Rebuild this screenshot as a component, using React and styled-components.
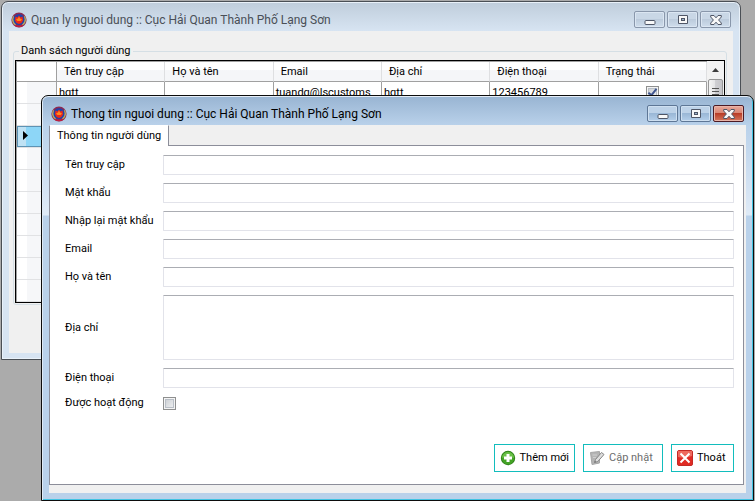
import React from "react";
import styled, { createGlobalStyle, css } from "styled-components";

const GlobalStyle = createGlobalStyle`
  *, *::before, *::after { box-sizing: border-box; }
  body {
    margin: 0;
    background: #ababab;
    font-family: Roboto, "Liberation Sans", Arial, sans-serif;
    font-size: 11px;
    line-height: 14px;
    color: #000;
  }
  input, textarea, button { font: inherit; color: inherit; }
`;

const Desktop = styled.main`
  position: relative;
  min-height: 100vh;
  padding: 1px 14px 0 1px;
  background: #ababab;
`;

const Window = styled.section`
  display: flex;
  flex-direction: column;
  border: 1px solid ${(p) => (p.$active ? "#0c0c0c" : "#4a4f55")};
  border-radius: 7px 7px 0 0;
  padding: 0 6px 6px;
  background: ${(p) =>
    p.$active
      ? "linear-gradient(#98b4d2 0, #b9d1ea 29px, #dfeaf6 119px, #b9d1ea 120px)"
      : "linear-gradient(#bfcddb 0, #d7e4f2 29px)"};
  box-shadow: inset 0 0 0 1px #e9f1f9;
`;

const FrontWindow = styled(Window)`
  position: absolute;
  top: 95px;
  left: 41px;
  right: 1px;
  padding-bottom: 7px;
  box-shadow: inset 1px 0 0 #dfeaf5, inset -1px -1px 0 #41c3e2, inset 0 1px 0 #e6eef7;
`;

const TitleBar = styled.header`
  display: flex;
  align-items: center;
  height: 29px;
  padding: 6px 3px 0 3px;
  gap: 4px;
  color: ${(p) => (p.$active ? "#000" : "#4a4f57")};
`;

const Title = styled.h1`
  flex: 1;
  margin: 0;
  font: 400 12px/16px Roboto, "Open Sans", sans-serif;
  white-space: nowrap;
`;

const Controls = styled.div`
  display: flex;
  gap: 2px;
`;

const ControlButton = styled.button`
  display: grid;
  place-items: center;
  width: 31px;
  height: 17px;
  padding: 0;
  border: 1px solid #8997ab;
  border-radius: 2px;
  background: linear-gradient(#c9d7e6 0 45%, #bccbdc 50%, #cfddec);
  box-shadow: inset 0 0 0 1px #dbe6f2;
  ${(p) =>
    p.$active &&
    css`
      border-color: #5e7796;
      background: linear-gradient(#bdd2e8 0 45%, #9ab7d6 50%, #b4cfea);
      box-shadow: inset 0 0 0 1px #cfe0f1;
    `}
  ${(p) =>
    p.$danger &&
    css`
      border-color: #4c1a24;
      background: linear-gradient(#e8a99c 0, #d98775 45%, #b93d27 50%, #d4775d);
      box-shadow: inset 0 0 0 1px #e9b4a8;
    `}
`;

const Client = styled.div`
  margin: 0 1px;
  background: #f0f0f0;
`;

const BackClient = styled(Client)`
  padding: 13px 6px 48px 4px;
`;

const FrontClient = styled(Client)`
  padding: 0 2px 8px 0;
`;

const GroupBox = styled.fieldset`
  min-width: 0;
  margin: 0;
  padding: 2px 1px 1px;
  border: 1px solid #d5dfe5;
  border-radius: 3px;
`;

const Legend = styled.legend`
  margin-left: 4px;
  padding: 0 2px;
`;

const GridFrame = styled.div`
  display: flex;
  border: 1px solid #000;
  background: #fff;
`;

const DataGrid = styled.table`
  flex: 1;
  width: 100%;
  table-layout: fixed;
  border-collapse: separate;
  border-spacing: 0;
  border-left: 1px solid #a0a0a0;
  border-top: 1px solid #a0a0a0;
`;

const SelectorCol = styled.col`
  width: 40px;
`;

const HeadCell = styled.th`
  height: 20px;
  padding: 0 7px;
  text-align: left;
  font-weight: 400;
  border-right: 1px solid ${(p) => (p.$corner ? "#a0a0a0" : "#dedfe1")};
  border-bottom: 1px solid #a0a0a0;
  background: ${(p) => (p.$corner ? "#fff" : "linear-gradient(#fff 0 40%, #f5f6f8 45%)")};
`;

const RowHead = styled.th`
  height: 22px;
  padding: 0 0 0 4px;
  text-align: left;
  border-right: 1px solid #a0a0a0;
  border-bottom: 1px solid #e1e2e4;
  background: ${(p) =>
    p.$selected
      ? "linear-gradient(90deg, #bfe2f4 0 9px, #8dd6f7 9px)"
      : "linear-gradient(90deg, #fff 0 10px, #f6f7f9 10px)"};
  ${(p) => p.$selected && css`box-shadow: inset 0 0 0 1px #5d93b4;`}
`;

const Cell = styled.td`
  height: 22px;
  padding: 0 2px;
  overflow: hidden;
  white-space: nowrap;
  text-align: ${(p) => (p.$center ? "center" : "left")};
  border-right: 1px solid #a0a0a0;
  border-bottom: 1px solid #a0a0a0;
`;

const ScrollBar = styled.div`
  display: flex;
  flex: none;
  flex-direction: column;
  align-items: center;
  width: 17px;
  background: #f0f0f0;
`;

const ScrollButton = styled.button`
  display: grid;
  place-items: center;
  width: 100%;
  height: 18px;
  padding: 0;
  border: 0;
  background: #f2f2f2;
`;

const ScrollThumb = styled.div`
  display: flex;
  justify-content: center;
  width: 15px;
  height: 60px;
  padding-top: 8px;
  border: 1px solid #979797;
  border-radius: 2px;
  background: linear-gradient(90deg, #f5f5f5, #e4e4e6 45%, #cfcfd3 50%, #c4c4c8);
`;

const CheckBox = styled.input`
  appearance: none;
  display: inline-grid;
  place-items: center;
  width: 13px;
  height: 13px;
  margin: 0;
  vertical-align: middle;
  border: 1px solid #8e8f8f;
  background: linear-gradient(135deg, #c6cacf, #f4f5f6);
  box-shadow: inset 0 0 0 1px #f4f4f4, inset 0 0 0 2px #b9bfc7;
  &:checked::after {
    content: "";
    width: 5px;
    height: 9px;
    margin-bottom: 3px;
    border: solid #3f558f;
    border-width: 0 2px 2px 0;
    rotate: 38deg;
  }
`;

const TabStrip = styled.div`
  display: flex;
  height: 20px;
`;

const Tab = styled.button`
  height: 21px;
  padding: 0 7px 1px;
  border: 1px solid #8c8e9a;
  border-top-color: #fff;
  border-bottom: 0;
  background: #fff;
  z-index: 1;
`;

const TabPanel = styled.form`
  display: flex;
  flex-direction: column;
  gap: 34px;
  padding: 9px 9px 12px 15px;
  border: 1px solid #8c8e9a;
  background: #fff;
`;

const Fields = styled.div`
  display: grid;
  grid-template-columns: 98px 1fr;
  row-gap: 8px;
  align-items: center;
`;

const Label = styled.label`
  white-space: nowrap;
`;

const fieldStyle = css`
  display: block;
  width: 100%;
  padding: 2px 4px;
  border: 1px solid #e2e3ea;
  border-top-color: #abadb3;
  border-radius: 1px;
  background: #fff;
  outline: none;
`;

const TextBox = styled.input`
  ${fieldStyle}
  height: 20px;
`;

const TextArea = styled.textarea`
  ${fieldStyle}
  height: 65px;
  resize: none;
`;

const Actions = styled.div`
  display: flex;
  justify-content: flex-end;
  gap: 8px;
`;

const ActionButton = styled.button`
  display: flex;
  align-items: center;
  gap: 4px;
  min-width: ${(p) => (p.$compact ? "63px" : "80px")};
  height: 28px;
  padding: 0 5px;
  border: 1px solid #12bdbd;
  background: #fff;
  white-space: nowrap;
  &:disabled { color: #6d6d6d; }
`;

const Emblem = () => (
  <svg width="16" height="16" viewBox="0 0 16 16" aria-hidden="true">
    <circle cx="8" cy="8" r="7.6" fill="#8c2a52" />
    <path d="M2.500 3.500A7 7 0 0 0 4 13.500L6 11L3.800 8ZM13.500 3.500A7 7 0 0 1 12 13.500L10 11L12.200 8Z" fill="#b9b060" />
    <circle cx="8" cy="7.5" r="5.6" fill="#2440a8" />
    <path d="M3.500 12.500Q8 15 12.500 12.500L11.500 14.500Q8 16 4.500 14.500Z" fill="#c02040" />
    <path d="M4.500 4.500L6.500 5.500L8 3.500L9.500 5.500L11.500 4.500L12 8.500Q11 11.500 8 12Q5 11.500 4 8.500Z" fill="#ee2a18" />
    <path d="M8 4.500L9 6.500L11 7.500L9.500 9H6.500L5 7.500L7 6.500Z" fill="#ff8a1c" />
  </svg>
);

const MinimizeIcon = () => (
  <svg width="12" height="12" viewBox="0 0 12 12" aria-hidden="true">
    <rect x="1" y="6.5" width="10" height="4" rx="1" fill="#f8f8f8" stroke="#4f5666" />
  </svg>
);

const MaximizeIcon = () => (
  <svg width="12" height="10" viewBox="0 0 12 10" aria-hidden="true">
    <path d="M1.5.5H10.500V8.500H1.500Z" fill="#f8f8f8" stroke="#4f5666" />
    <rect x="4.500" y="3.500" width="3" height="2" fill="#9db4cc" stroke="#4f5666" />
  </svg>
);

const CloseIcon = () => (
  <svg width="12" height="10" viewBox="0 0 12 10" aria-hidden="true">
    <path
      d="M.7.5H4L6 2.800L8 .5H11.300V2L8.600 5L11.300 8V9.500H8L6 7.200L4 9.500H.7V8L3.400 5L.7 2Z"
      fill="#f8f8f8"
      stroke="#4f5666"
    />
  </svg>
);

const AddIcon = () => (
  <svg width="16" height="16" viewBox="0 0 16 16" aria-hidden="true">
    <circle cx="8" cy="8" r="7.200" fill="#2c7d18" />
    <circle cx="8" cy="8" r="6.400" fill="#43a325" />
    <path d="M2 8A6 6 0 0 1 14 8Q8 5 2 8Z" fill="#6abf48" />
    <path d="M6.500 4H9.500V6.500H12V9.500H9.500V12H6.500V9.500H4V6.500H6.500Z" fill="#fff" />
  </svg>
);

const EditIcon = () => (
  <svg width="16" height="16" viewBox="0 0 16 16" aria-hidden="true">
    <path d="M1.500 2.500L10.500 1.500V13L3 14.500Z" fill="#b4b4b4" stroke="#a6a6a6" />
    <path d="M3.500 5H8M4 7.500H7" stroke="#cfcfcf" />
    <path d="M5.500 12.500L6.500 9.500L12.500 2.500L15 4.500L8.800 11.500Z" fill="#dedede" stroke="#858585" />
    <path d="M5.500 12.500L6 11L7 12Z" fill="#555" />
  </svg>
);

const ExitIcon = () => (
  <svg width="16" height="16" viewBox="0 0 16 16" aria-hidden="true">
    <rect x=".5" y=".5" width="15" height="15" rx="1.500" fill="#e02b24" stroke="#c52a25" />
    <path d="M1 1H15V6Q8 9 1 7Z" fill="#ee6a5e" />
    <path d="M3.500 3.500L12.500 12.500M12.500 3.500L3.500 12.500" stroke="#fff" strokeWidth="2" />
  </svg>
);

const RowPointer = () => (
  <svg width="8" height="9" viewBox="0 0 8 9" aria-hidden="true">
    <path d="M2 0L7 4.500L2 9Z" fill="#000" />
  </svg>
);

const UpArrow = () => (
  <svg width="7" height="4" viewBox="0 0 7 4" aria-hidden="true">
    <path d="M0 4L3.500 0L7 4Z" fill="#3c3c3c" />
  </svg>
);

const Grip = () => (
  <svg width="7" height="8" viewBox="0 0 7 8" aria-hidden="true">
    <path d="M0 .5H7M0 3.500H7M0 6.500H7" stroke="#555" />
  </svg>
);

function WindowTitle({ active, children }) {
  return (
    <TitleBar $active={active}>
      <Emblem />
      <Title>{children}</Title>
      <Controls>
        <ControlButton $active={active} type="button" aria-label="Minimize"><MinimizeIcon /></ControlButton>
        <ControlButton $active={active} type="button" aria-label="Maximize"><MaximizeIcon /></ControlButton>
        <ControlButton $active={active} $danger={active} type="button" aria-label="Close"><CloseIcon /></ControlButton>
      </Controls>
    </TitleBar>
  );
}

const columns = ["Tên truy cập", "Họ và tên", "Email", "Địa chỉ", "Điện thoại", "Trạng thái"];
const users = [["hqtt", "", "tuandq@lscustoms", "hqtt", "123456789"]];
const rowCount = 10;
const selectedRow = 2;

function UserGrid() {
  return (
    <GridFrame>
      <DataGrid>
        <colgroup>
          <SelectorCol />
          {columns.map((c) => <col key={c} />)}
        </colgroup>
        <thead>
          <tr>
            <HeadCell $corner />
            {columns.map((c) => <HeadCell key={c} scope="col">{c}</HeadCell>)}
          </tr>
        </thead>
        <tbody>
          {Array.from({ length: rowCount }, (_, i) => (
            <tr key={i}>
              <RowHead scope="row" $selected={i === selectedRow}>
                {i === selectedRow && <RowPointer />}
              </RowHead>
              {columns.slice(0, 5).map((c, j) => <Cell key={c}>{users[i]?.[j]}</Cell>)}
              <Cell $center>
                {users[i] && <CheckBox type="checkbox" defaultChecked aria-label="Trạng thái" />}
              </Cell>
            </tr>
          ))}
        </tbody>
      </DataGrid>
      <ScrollBar>
        <ScrollButton type="button" aria-label="Scroll up"><UpArrow /></ScrollButton>
        <ScrollThumb><Grip /></ScrollThumb>
      </ScrollBar>
    </GridFrame>
  );
}

function Field({ id, label, type = "text" }) {
  return (
    <>
      <Label htmlFor={id}>{label}</Label>
      <TextBox id={id} type={type} />
    </>
  );
}

export default function App() {
  return (
    <Desktop>
      <GlobalStyle />
      <Window>
        <WindowTitle>Quan ly nguoi dung :: Cục Hải Quan Thành Phố Lạng Sơn</WindowTitle>
        <BackClient>
          <GroupBox>
            <Legend>Danh sách người dùng</Legend>
            <UserGrid />
          </GroupBox>
        </BackClient>
      </Window>
      <FrontWindow $active>
        <WindowTitle active>Thong tin nguoi dung :: Cục Hải Quan Thành Phố Lạng Sơn</WindowTitle>
        <FrontClient>
          <TabStrip role="tablist">
            <Tab type="button" role="tab" aria-selected="true">Thông tin người dùng</Tab>
          </TabStrip>
          <TabPanel role="tabpanel">
            <Fields>
              <Field id="username" label="Tên truy cập" />
              <Field id="password" label="Mật khẩu" type="password" />
              <Field id="confirm" label="Nhập lại mật khẩu" type="password" />
              <Field id="email" label="Email" />
              <Field id="fullname" label="Họ và tên" />
              <Label htmlFor="address">Địa chỉ</Label>
              <TextArea id="address" />
              <Field id="phone" label="Điện thoại" />
              <Label htmlFor="enabled">Được hoạt động</Label>
              <CheckBox id="enabled" type="checkbox" />
            </Fields>
            <Actions>
              <ActionButton type="button"><AddIcon />Thêm mới</ActionButton>
              <ActionButton type="button" disabled><EditIcon />Cập nhật</ActionButton>
              <ActionButton $compact type="button"><ExitIcon />Thoát</ActionButton>
            </Actions>
          </TabPanel>
        </FrontClient>
      </FrontWindow>
    </Desktop>
  );
}
